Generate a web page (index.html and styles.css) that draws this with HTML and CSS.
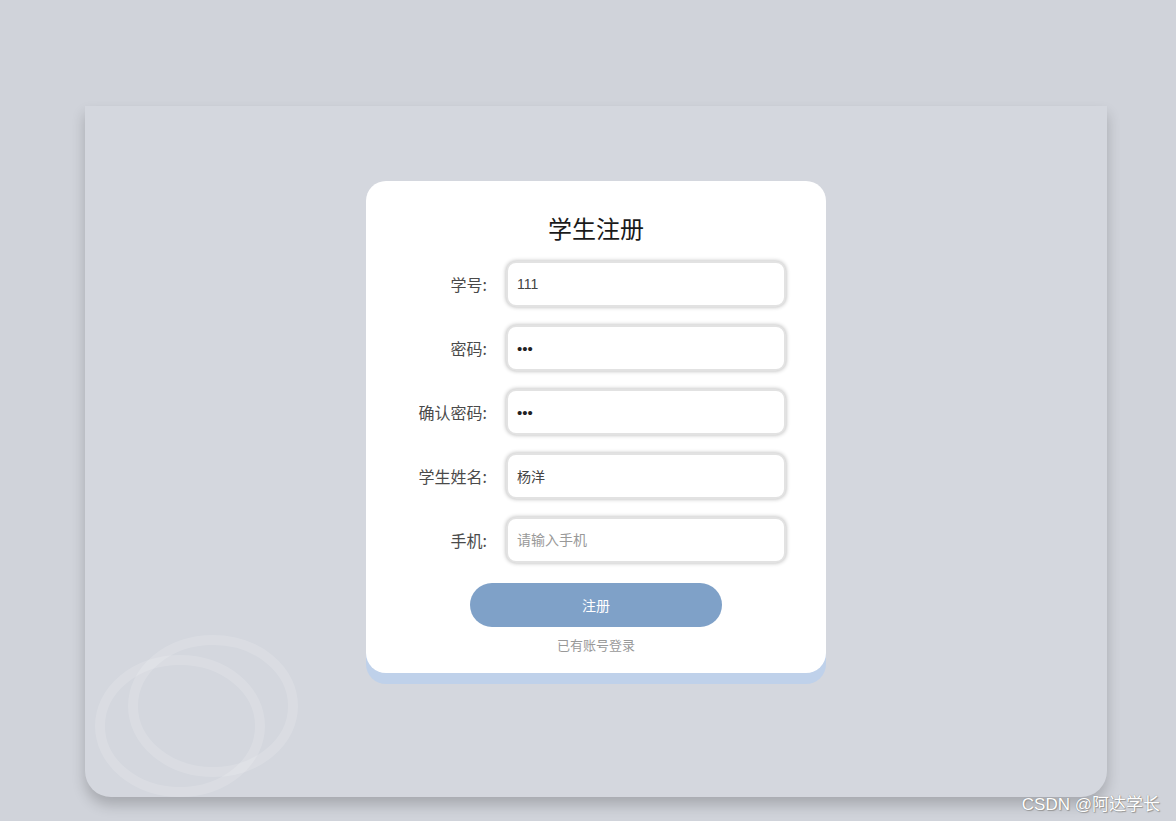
FILE: index.html
```html
<!DOCTYPE html>
<html lang="zh-CN">
<head>
  <meta charset="UTF-8">
  <title>学生注册</title>
  <link rel="stylesheet" href="styles.css">
</head>
<body>

<div id="page">
  <svg class="rings" width="300" height="200" viewBox="0 0 300 200">
    <ellipse cx="128" cy="100" rx="80" ry="66" />
    <ellipse cx="95" cy="120" rx="80" ry="66" />
  </svg>

  <div id="register">
    <h2 class="title">学生注册</h2>

    <div class="row">
      <label class="label">学号:</label>
      <input class="field" type="text" value="111">
    </div>
    <div class="row">
      <label class="label">密码:</label>
      <input class="field" type="password" value="111">
    </div>
    <div class="row">
      <label class="label">确认密码:</label>
      <input class="field" type="password" value="111">
    </div>
    <div class="row">
      <label class="label">学生姓名:</label>
      <input class="field" type="text" value="杨洋">
    </div>
    <div class="row">
      <label class="label">手机:</label>
      <input class="field" type="text" placeholder="请输入手机">
    </div>

    <button class="submit-btn">注册</button>
    <a class="login-link">已有账号登录</a>
  </div>
</div>

<div class="watermark">CSDN @阿达学长</div>

</body>
</html>
```

FILE: styles.css
```css
body {
  margin: 0;
  height: 821px;
  overflow: hidden;
  background-color: #d0d3da;
  font-family: "Noto Sans CJK SC", "Noto Sans", sans-serif;
  position: relative;
}

#page {
  position: relative;
  overflow: hidden;
  margin: 106px 0 0 85px;
  width: 1022px;
  height: 691px;
  padding-top: 75px;
  box-sizing: border-box;
  background-color: #d4d7de;
  border-radius: 0 0 26px 26px;
  box-shadow: 0 8px 14px rgba(0, 0, 0, 0.2);
}

.rings {
  position: absolute;
  left: 0;
  top: 500px;
}

.rings ellipse {
  fill: none;
  stroke: rgba(255, 255, 255, 0.14);
  stroke-width: 10;
}

#register {
  position: relative;
  width: 460px;
  height: 492px;
  margin: 0 auto;
  padding-top: 30px;
  box-sizing: border-box;
  background: #fff;
  border-radius: 20px;
  box-shadow: 0 11px 0 #bfd1ea;
  display: flex;
  flex-direction: column;
  align-items: center;
}

.title {
  margin: 0 0 16px;
  font-size: 24px;
  font-weight: normal;
  line-height: 34px;
  color: #1a1a1a;
}

.row {
  display: flex;
  align-items: center;
  width: 100%;
  margin-bottom: 18px;
}

.row:last-of-type {
  margin-bottom: 0;
}

.label {
  width: 121px;
  margin-right: 19px;
  text-align: right;
  font-size: 16px;
  color: #4a4a4a;
}

.field {
  width: 280px;
  height: 46px;
  box-sizing: border-box;
  padding: 0 9px;
  border: 2px solid #e2e2e2;
  border-radius: 10px;
  box-shadow: 0 0 4px rgba(0, 0, 0, 0.3);
  font-family: "Liberation Sans", "Noto Sans CJK SC", sans-serif;
  font-size: 14px;
  color: #444;
  outline: none;
}

.field[type="password"] {
  font-size: 15px;
  color: #222;
}

.field::placeholder {
  color: #999;
}

.submit-btn {
  margin-top: 20px;
  width: 252px;
  height: 44px;
  border: none;
  border-radius: 22px;
  background-color: #7fa1c8;
  color: #fff;
  font-family: inherit;
  font-size: 14px;
}

.login-link {
  margin-top: 9px;
  font-size: 13px;
  line-height: 18px;
  color: #999;
}

.watermark {
  position: absolute;
  right: 16px;
  bottom: 6px;
  font-family: "Liberation Sans", "Noto Sans CJK SC", sans-serif;
  font-size: 17px;
  color: #fff;
  text-shadow: 0 0 1px #777, 1px 1px 1px #999;
}
```
